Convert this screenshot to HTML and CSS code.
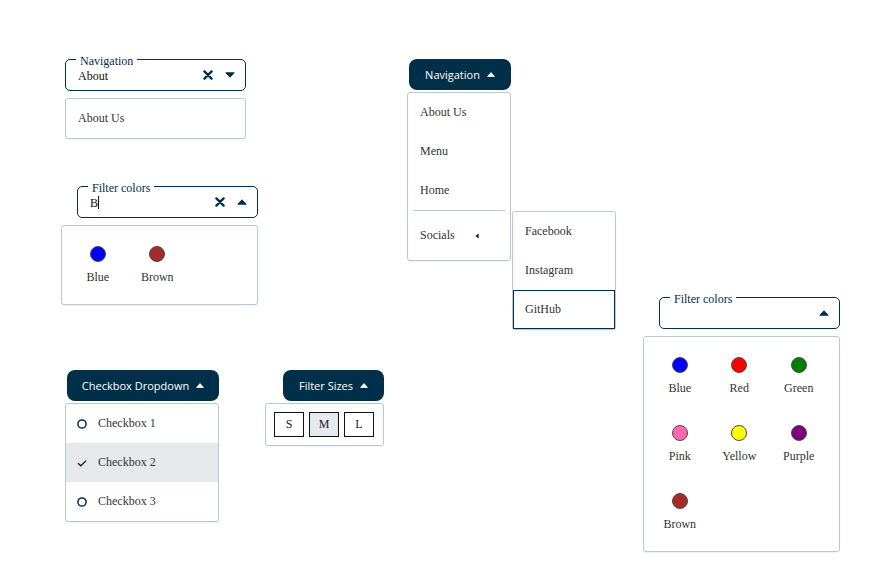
FILE: index.html
```html
<!DOCTYPE html>
<html lang="en">
<head>
<meta charset="utf-8">
<title>Dropdowns</title>
<link rel="stylesheet" href="styles.css">
</head>
<body>
<div class="page">

  <!-- Navigation select -->
  <div class="dd dd-nav-select">
    <div class="field">
      <span class="field-label">Navigation</span>
      <span class="field-value">About</span>
      <span class="field-icons">
        <svg class="ic-x" viewBox="0 0 10 10" width="10" height="10"><path d="M1.4 1.4L8.6 8.6M8.6 1.4L1.4 8.6" stroke="currentColor" stroke-width="2.3" stroke-linecap="round"/></svg>
        <svg class="ic-caret" viewBox="0 0 10 6" width="10" height="6"><path d="M0.8 0.8h8.4L5 5.2z" fill="currentColor" stroke="currentColor" stroke-width="1" stroke-linejoin="round"/></svg>
      </span>
    </div>
    <ul class="menu menu-about">
      <li class="item item-short">About Us</li>
    </ul>
  </div>

  <!-- Navigation button menu -->
  <div class="dd dd-nav-btn">
    <button class="btn btn-nav" type="button">Navigation
      <svg class="ic-up" viewBox="0 0 8 5" width="8" height="5"><path d="M0.5 4.6h7L4 0.6z" fill="#fff" stroke="#fff" stroke-width="0.8" stroke-linejoin="round"/></svg>
    </button>
    <ul class="menu menu-nav">
      <li class="item">About Us</li>
      <li class="item">Menu</li>
      <li class="item">Home</li>
      <li class="divider"></li>
      <li class="item item-socials">Socials
        <svg class="ic-left" viewBox="0 0 4 6" width="4" height="6"><path d="M3.6 0.4v5.2L0.4 3z" fill="#1a1a1a"/></svg>
        <ul class="menu submenu">
          <li class="item">Facebook</li>
          <li class="item">Instagram</li>
          <li class="item item-focus">GitHub</li>
        </ul>
      </li>
    </ul>
  </div>

  <!-- Filter colors (search "B") -->
  <div class="dd dd-filter-b">
    <div class="field">
      <span class="field-label">Filter colors</span>
      <span class="field-value">B<span class="cursor"></span></span>
      <span class="field-icons">
        <svg class="ic-x" viewBox="0 0 10 10" width="10" height="10"><path d="M1.4 1.4L8.6 8.6M8.6 1.4L1.4 8.6" stroke="currentColor" stroke-width="2.3" stroke-linecap="round"/></svg>
        <svg class="ic-caret" viewBox="0 0 10 6" width="10" height="6"><path d="M0.8 5.2h8.4L5 0.8z" fill="currentColor" stroke="currentColor" stroke-width="1" stroke-linejoin="round"/></svg>
      </span>
    </div>
    <div class="menu color-menu">
      <div class="swatch-item"><span class="swatch sw-blue"></span><span class="swatch-label">Blue</span></div>
      <div class="swatch-item"><span class="swatch sw-brown"></span><span class="swatch-label">Brown</span></div>
    </div>
  </div>

  <!-- Filter colors (all) -->
  <div class="dd dd-filter-all">
    <div class="field">
      <span class="field-label">Filter colors</span>
      <span class="field-value"></span>
      <span class="field-icons">
        <svg class="ic-caret" viewBox="0 0 10 6" width="10" height="6"><path d="M0.8 5.2h8.4L5 0.8z" fill="currentColor" stroke="currentColor" stroke-width="1" stroke-linejoin="round"/></svg>
      </span>
    </div>
    <div class="menu color-menu">
      <div class="swatch-item"><span class="swatch sw-blue"></span><span class="swatch-label">Blue</span></div>
      <div class="swatch-item"><span class="swatch sw-red"></span><span class="swatch-label">Red</span></div>
      <div class="swatch-item"><span class="swatch sw-green"></span><span class="swatch-label">Green</span></div>
      <div class="swatch-item"><span class="swatch sw-pink"></span><span class="swatch-label">Pink</span></div>
      <div class="swatch-item"><span class="swatch sw-yellow"></span><span class="swatch-label">Yellow</span></div>
      <div class="swatch-item"><span class="swatch sw-purple"></span><span class="swatch-label">Purple</span></div>
      <div class="swatch-item"><span class="swatch sw-brown"></span><span class="swatch-label">Brown</span></div>
    </div>
  </div>

  <!-- Checkbox dropdown -->
  <div class="dd dd-check">
    <button class="btn btn-check" type="button">Checkbox Dropdown
      <svg class="ic-up" viewBox="0 0 8 5" width="8" height="5"><path d="M0.5 4.6h7L4 0.6z" fill="#fff" stroke="#fff" stroke-width="0.8" stroke-linejoin="round"/></svg>
    </button>
    <ul class="menu menu-check">
      <li class="item check-item">
        <svg class="ic-box" viewBox="0 0 10 10" width="10" height="10"><circle cx="5" cy="5" r="4.1" fill="none" stroke="#003049" stroke-width="1.5"/></svg>
        Checkbox 1</li>
      <li class="item check-item is-checked">
        <svg class="ic-box" viewBox="0 0 10 10" width="10" height="10"><path d="M1 5.2L3.8 7.8L9.2 2.6" fill="none" stroke="#1a1a1a" stroke-width="1.3"/></svg>
        Checkbox 2</li>
      <li class="item check-item">
        <svg class="ic-box" viewBox="0 0 10 10" width="10" height="10"><circle cx="5" cy="5" r="4.1" fill="none" stroke="#003049" stroke-width="1.5"/></svg>
        Checkbox 3</li>
    </ul>
  </div>

  <!-- Filter sizes -->
  <div class="dd dd-sizes">
    <button class="btn btn-sizes" type="button">Filter Sizes
      <svg class="ic-up" viewBox="0 0 8 5" width="8" height="5"><path d="M0.5 4.6h7L4 0.6z" fill="#fff" stroke="#fff" stroke-width="0.8" stroke-linejoin="round"/></svg>
    </button>
    <div class="menu menu-sizes">
      <span class="size-btn">S</span>
      <span class="size-btn is-active">M</span>
      <span class="size-btn">L</span>
    </div>
  </div>

</div>
</body>
</html>
```

FILE: styles.css
```css
html, body {
  margin: 0;
  padding: 0;
  background: #ffffff;
}

body {
  font-family: "Liberation Serif", "Times New Roman", serif;
  font-size: 12px;
  color: #333333;
}

.page {
  display: grid;
  grid-template-columns: 204px 144px 250px 1fr;
  grid-template-rows: 127px 111px 73px auto;
  padding: 59px 0 0 61px;
  height: 584px;
  box-sizing: border-box;
}

.dd {
  position: relative;
  justify-self: start;
  align-self: start;
}

.dd-nav-select { grid-column: 1; grid-row: 1; margin-left: 4px; width: 181px; }
.dd-filter-b   { grid-column: 1; grid-row: 2; margin-left: 16px; width: 181px; }
.dd-check      { grid-column: 1; grid-row: 4; margin-left: 6px; width: 152px; }
.dd-sizes      { grid-column: 2; grid-row: 4; margin-left: 18px; width: 101px; }
.dd-nav-btn    { grid-column: 3; grid-row: 1; width: 102px; }
.dd-filter-all { grid-column: 4; grid-row: 3; width: 181px; }

/* ---------- outlined field with floating label ---------- */
.field {
  position: relative;
  box-sizing: border-box;
  height: 32px;
  border: 1px solid #003049;
  border-radius: 5px;
  display: flex;
  align-items: center;
  padding: 0 10px 0 12px;
}

.field-label {
  position: absolute;
  top: -6px;
  left: 10px;
  padding: 0 4px;
  background: #ffffff;
  font-size: 12px;
  line-height: 14px;
  color: #003049;
}

.field-value {
  flex: 1;
  display: flex;
  align-items: center;
  font-size: 12px;
  color: #111111;
  line-height: 14px;
  padding-top: 1px;
}

.cursor {
  display: inline-block;
  width: 0;
  height: 13px;
  border-left: 1px solid #111111;
}

.field-icons {
  display: flex;
  align-items: center;
  gap: 12px;
  color: #003049;
}

.field-icons svg { display: block; }

/* ---------- dark buttons ---------- */
.btn {
  box-sizing: border-box;
  height: 31px;
  width: 100%;
  border: none;
  border-radius: 8px;
  background: #003049;
  color: #ffffff;
  font-family: "Open Sans", "Noto Sans", sans-serif;
  font-size: 11px;
  display: flex;
  align-items: center;
  justify-content: center;
  gap: 7px;
  padding: 0;
  cursor: pointer;
}

.btn svg { display: block; }

/* ---------- menus ---------- */
.menu {
  position: absolute;
  z-index: 2;
  margin: 0;
  padding: 0;
  list-style: none;
  background: #ffffff;
  border: 1px solid #b8c9d3;
  border-radius: 3px;
  box-sizing: border-box;
  box-shadow: 0 1px 1px rgba(0, 0, 0, 0.06);
}

.item {
  position: relative;
  height: 39px;
  display: flex;
  align-items: center;
  padding: 0 12px;
  font-size: 12px;
  color: #333333;
  white-space: nowrap;
}

.menu-about {
  top: calc(100% + 7px);
  left: 0;
  width: 181px;
}

.item-short { height: 39px; }

.menu-nav {
  top: calc(100% + 2px);
  right: 0;
  width: 104px;
}

.divider {
  height: 1px;
  margin: 0 5px;
  background: #b8c9d3;
}

.item-socials { height: 49px; }

.ic-left {
  display: block;
  margin-left: 20px;
}

.submenu {
  top: 0;
  left: calc(100% + 2px);
  width: 104px;
}

.item-focus {
  outline: 1px solid #003049;
  outline-offset: -1px;
}

/* checkbox menu */
.menu-check {
  top: calc(100% + 2px);
  right: 0;
  width: 154px;
}

.check-item {
  padding-left: 11px;
  gap: 11px;
}

.check-item svg { display: block; }

.check-item.is-checked { background: #e5e9eb; }

/* sizes menu */
.menu-sizes {
  top: calc(100% + 2px);
  right: 0;
  width: 119px;
  padding: 8px;
  display: flex;
  gap: 5px;
}

.size-btn {
  box-sizing: border-box;
  width: 30px;
  height: 25px;
  border: 1px solid #111111;
  display: flex;
  align-items: center;
  justify-content: center;
  font-size: 12px;
  color: #222222;
  background: #ffffff;
}

.size-btn.is-active { background: #e5e9eb; }

/* color menus */
.color-menu {
  top: calc(100% + 7px);
  right: 0;
  width: 197px;
  padding: 20px 6px;
  display: grid;
  grid-template-columns: repeat(3, 59.5px);
  row-gap: 30px;
}

.swatch-item {
  display: flex;
  flex-direction: column;
  align-items: center;
}

.swatch {
  box-sizing: border-box;
  width: 16px;
  height: 16px;
  border-radius: 50%;
  border: 1px solid #4a4a4a;
}

.swatch-label {
  margin-top: 8px;
  line-height: 14px;
  font-size: 12px;
  color: #333333;
}

.sw-blue   { background: #0000ff; }
.sw-red    { background: #ff0000; }
.sw-green  { background: #008000; }
.sw-pink   { background: #ff69b4; }
.sw-yellow { background: #ffff00; }
.sw-purple { background: #800080; }
.sw-brown  { background: #a52a2a; }
```
